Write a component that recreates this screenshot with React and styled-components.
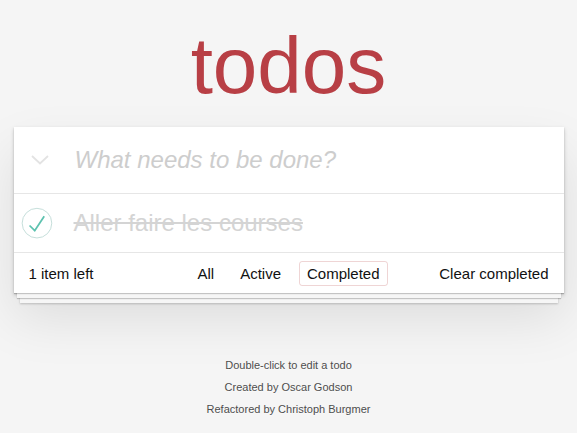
import React, { useState } from 'react';
import styled, { createGlobalStyle } from 'styled-components';

const GlobalStyle = createGlobalStyle`
  body {
    margin: 0;
    background: #f5f5f5;
    font-family: "Liberation Sans", Arial, sans-serif;
    color: #111;
    -webkit-font-smoothing: antialiased;
  }
`;

const Page = styled.section`
  width: 550px;
  margin: 0 auto;
`;

const Title = styled.h1`
  margin: 26px 0 21px;
  font-size: 80px;
  line-height: 80px;
  font-weight: 400;
  text-align: center;
  color: #b83f45;
`;

const Card = styled.div`
  background: #fff;
  box-shadow: 0 1px 1px rgba(0, 0, 0, 0.2), 0 8px 0 -3px #f6f6f6,
    0 9px 1px -3px rgba(0, 0, 0, 0.2), 0 16px 0 -6px #f6f6f6,
    0 17px 2px -6px rgba(0, 0, 0, 0.2), 0 2px 4px rgba(0, 0, 0, 0.2),
    0 25px 50px rgba(0, 0, 0, 0.1);
`;

const Header = styled.header`
  display: flex;
  align-items: center;
  height: 66px;
`;

const ToggleAll = styled.span`
  display: flex;
  justify-content: center;
  width: 48px;
  padding-left: 2px;
  margin-right: 10px;
`;

const NewTodo = styled.input`
  flex: 1;
  min-width: 0;
  height: 66px;
  box-sizing: border-box;
  padding: 16px 16px 16px 1px;
  border: none;
  outline: none;
  background: transparent;
  font-family: inherit;
  font-size: 24px;
  color: #4d4d4d;

  &::placeholder {
    font-style: italic;
    color: #cdcdcd;
  }
`;

const List = styled.ul`
  list-style: none;
  margin: 0;
  padding: 0;
  border-top: 1px solid #e6e6e6;
`;

const Item = styled.li`
  display: flex;
  align-items: center;
  font-size: 24px;
  line-height: 28px;
  padding: 15px 15px 15px 0;
`;

const Check = styled.span`
  display: flex;
  width: 40px;
  height: 40px;
  margin: -6px 20px -6px 0;
`;

const Label = styled.span`
  color: ${p => (p.$done ? '#d4d4d4' : '#4d4d4d')};
  text-decoration: ${p => (p.$done ? 'line-through' : 'none')};
`;

const Footer = styled.footer`
  display: grid;
  grid-template-columns: 1fr auto 1fr;
  align-items: center;
  height: 41px;
  box-sizing: border-box;
  padding: 0 15px;
  border-top: 1px solid #e6e6e6;
  font-size: 15px;
  color: #111;
`;

const Filters = styled.ul`
  display: flex;
  gap: 4px;
  list-style: none;
  margin: 0;
  padding: 0;
`;

const Filter = styled.a`
  display: block;
  margin: 3px;
  padding: 3px 7px;
  border: 1px solid ${p => (p.$selected ? 'rgba(175, 47, 47, 0.2)' : 'transparent')};
  border-radius: 3px;
  color: inherit;
  text-decoration: none;
  cursor: pointer;
`;

const Clear = styled.button`
  justify-self: end;
  border: none;
  background: none;
  padding: 0;
  font-family: inherit;
  font-size: 15px;
  color: inherit;
  cursor: pointer;
`;

const Info = styled.footer`
  margin: 67px auto 0;
  font-size: 11px;
  color: #4d4d4d;
  text-align: center;
  text-shadow: 0 1px 0 rgba(255, 255, 255, 0.5);

  p {
    line-height: 1;
    margin: 11px 0;
  }
`;

const Chevron = () => (
  <svg width="18" height="10" viewBox="0 0 18 10">
    <polyline points="1,1 9,8.5 17,1" fill="none" stroke="#e3e3e3" strokeWidth="1.8" />
  </svg>
);

const Toggle = () => (
  <svg width="40" height="40" viewBox="-10 -18 100 135">
    <circle cx="50" cy="50" r="50" fill="none" stroke="#bddad5" strokeWidth="3" />
    <path fill="#5dc2af" d="M72 25L42 71 27 56l-4 4 20 20 34-52z" />
  </svg>
);

const App = () => {
  const [filter, setFilter] = useState('Completed');
  const todos = [{ id: 1, title: 'Aller faire les courses', done: true }];

  return (
    <Page>
      <GlobalStyle />
      <Title>todos</Title>
      <Card>
        <Header>
          <ToggleAll>
            <Chevron />
          </ToggleAll>
          <NewTodo placeholder="What needs to be done?" />
        </Header>
        <List>
          {todos.map(todo => (
            <Item key={todo.id}>
              <Check>
                <Toggle />
              </Check>
              <Label $done={todo.done}>{todo.title}</Label>
            </Item>
          ))}
        </List>
        <Footer>
          <span>1 item left</span>
          <Filters>
            {['All', 'Active', 'Completed'].map(name => (
              <li key={name}>
                <Filter $selected={filter === name} onClick={() => setFilter(name)}>
                  {name}
                </Filter>
              </li>
            ))}
          </Filters>
          <Clear>Clear completed</Clear>
        </Footer>
      </Card>
      <Info>
        <p>Double-click to edit a todo</p>
        <p>Created by Oscar Godson</p>
        <p>Refactored by Christoph Burgmer</p>
      </Info>
    </Page>
  );
};

export default App;
